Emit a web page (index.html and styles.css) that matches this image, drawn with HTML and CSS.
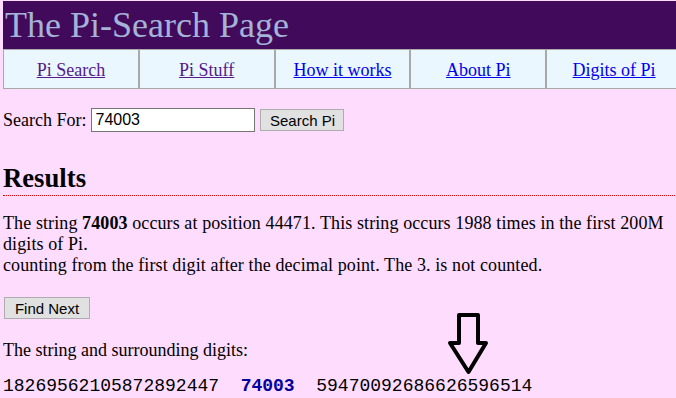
FILE: index.html
```html
<!DOCTYPE html>
<html>
<head>
<meta charset="utf-8">
<title>The Pi-Search Page</title>
<link rel="stylesheet" href="styles.css">
</head>
<body>
<div class="header"><h1 class="title">The Pi-Search Page</h1></div>
<nav class="nav">
  <div class="cell"><a class="visited" href="#">Pi Search</a></div>
  <div class="cell"><a class="visited" href="#">Pi Stuff</a></div>
  <div class="cell"><a href="#">How it works</a></div>
  <div class="cell"><a href="#">About Pi</a></div>
  <div class="cell"><a href="#">Digits of Pi</a></div>
</nav>
<form class="search">
  <label class="label">Search For:</label>
  <input class="field" type="text" value="74003">
  <button class="btn search-btn" type="button">Search Pi</button>
</form>
<h2 class="results">Results</h2>
<p class="text result-text">The string <b>74003</b> occurs at position 44471. This string occurs 1988 times in the first 200M digits of Pi.<br>counting from the first digit after the decimal point. The 3. is not counted.</p>
<div class="next-row"><button class="btn next-btn" type="button">Find Next</button></div>
<p class="text surround">The string and surrounding digits:</p>
<p class="digits">18269562105872892447&nbsp;&nbsp;<b class="hit">74003</b>&nbsp;&nbsp;59470092686626596514</p>
<svg class="arrow" width="44" height="66" viewBox="0 0 44 66"><path d="M13 4 H32 V32 H40 L22.5 61 L4 32 H13 Z" fill="none" stroke="#000" stroke-width="4" stroke-linejoin="round"/></svg>
</body>
</html>
```
FILE: styles.css
```css
html {
  overflow: hidden;
  background: #fedcfe;
}
body {
  margin: 1px 0 0 3px;
  width: 680px;
  position: relative;
  font-family: "Liberation Serif", "Times New Roman", serif;
  font-size: 18px;
  color: #000;
}
.header {
  background: #410a5b;
  height: 48px;
}
.title {
  margin: 0;
  padding: 4px 0 0 2px;
  font-weight: normal;
  font-size: 36px;
  line-height: 41px;
  color: #a3b4d6;
}
.nav {
  display: grid;
  grid-template-columns: repeat(5, 1fr);
  background: #eaf7ff;
  border-top: 1px solid #a9a9a9;
  border-bottom: 1px solid #a9a9a9;
  border-left: 1px solid #a9a9a9;
  height: 38px;
}
.cell {
  display: flex;
  align-items: center;
  justify-content: center;
  border-right: 2px solid #a9a9a9;
  padding-top: 2px;
}
.cell a {
  color: #0000ee;
}
.cell a.visited {
  color: #551a8b;
}
.search {
  display: flex;
  align-items: center;
  margin: 19px 0 0;
  height: 24px;
}
.label {
  margin-right: 5px;
}
.field {
  box-sizing: border-box;
  width: 164px;
  height: 24px;
  margin: 0;
  padding: 1px 3px;
  border: 1px solid #767676;
  background: #fff;
  font-family: "Liberation Sans", Arial, sans-serif;
  font-size: 16px;
}
.btn {
  box-sizing: border-box;
  height: 22px;
  margin: 0;
  padding: 0;
  border: 1px solid #adadad;
  background: #e1e1e1;
  font-family: "Liberation Sans", Arial, sans-serif;
  font-size: 15px;
  color: #000;
  white-space: nowrap;
}
.search-btn {
  width: 84px;
  margin-left: 5px;
}
.results {
  margin: 31px 0 0;
  padding: 0 0 1px;
  font-size: 26.7px;
  font-weight: bold;
  border-bottom: 1px dotted #e00;
}
.text {
  margin: 0;
  line-height: 21px;
}
.result-text {
  margin-top: 17px;
  width: 668px;
  letter-spacing: 0.1px;
}
.next-row {
  display: flex;
  margin-top: 21px;
}
.next-btn {
  width: 86px;
  margin-left: 1px;
}
.surround {
  margin-top: 21px;
}
.digits {
  margin: 15px 0 0;
  font-family: "Liberation Mono", "Courier New", monospace;
  font-size: 18px;
  line-height: 20px;
}
.hit {
  color: #00009c;
}
.arrow {
  position: absolute;
  left: 443px;
  top: 310px;
}
```
